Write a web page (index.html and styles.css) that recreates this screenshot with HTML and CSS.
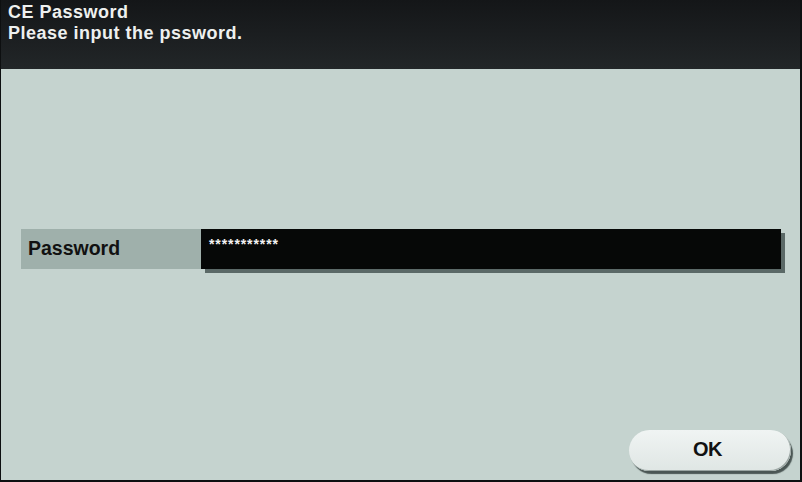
FILE: index.html
```html
<!DOCTYPE html>
<html lang="en">
<head>
<meta charset="utf-8">
<title>CE Password</title>
<link rel="stylesheet" href="styles.css">
</head>
<body>
<div class="screen">
  <header class="title-bar">
    <div class="title">CE Password</div>
    <div class="subtitle">Please input the pssword.</div>
  </header>
  <main class="panel">
    <div class="field-row">
      <div class="field-label">Password</div>
      <div class="field-input">***********</div>
    </div>
    <div class="actions">
      <button class="ok-button" type="button">OK</button>
    </div>
  </main>
</div>
</body>
</html>
```

FILE: styles.css
```css
html, body {
  margin: 0;
  padding: 0;
}

body {
  width: 802px;
  height: 482px;
  overflow: hidden;
  background: #0d0f10;
  font-family: "Liberation Sans", Arial, sans-serif;
}

.screen {
  width: 802px;
  height: 482px;
  display: flex;
  flex-direction: column;
  box-sizing: border-box;
  padding: 0 2px 2px 1px;
}

.title-bar {
  height: 69px;
  flex: none;
  box-sizing: border-box;
  padding: 2px 0 0 7px;
  background: linear-gradient(#141618, #222628);
  color: #eef0ef;
  font-size: 18px;
  font-weight: bold;
  letter-spacing: 0.5px;
  line-height: 21px;
}

.panel {
  flex: 1;
  background: #c5d3cf;
  display: flex;
  flex-direction: column;
  padding: 160px 0 0 20px;
}

.field-row {
  display: flex;
  height: 40px;
}

.field-label {
  width: 180px;
  background: #9fb0ab;
  color: #111;
  font-weight: bold;
  font-size: 19.5px;
  line-height: 38px;
  box-sizing: border-box;
  padding-left: 7px;
}

.field-input {
  width: 580px;
  background: #060807;
  color: #f2f2f2;
  font-size: 14px;
  font-weight: bold;
  letter-spacing: 0.9px;
  line-height: 30px;
  padding-left: 8px;
  box-sizing: border-box;
  box-shadow: 4px 4px 0 #5b6967;
}

.actions {
  margin-top: auto;
  display: flex;
  justify-content: flex-end;
  padding: 0 9px 9px 0;
}

.ok-button {
  width: 162px;
  height: 41px;
  border: none;
  border-radius: 21px;
  background: linear-gradient(#f0f4f3, #dfe6e4);
  box-shadow: inset -1px -1px 0 #9aa5a2, 2px 3px 1px #4a5654;
  font-family: "Liberation Sans", Arial, sans-serif;
  font-size: 20px;
  font-weight: bold;
  letter-spacing: -0.5px;
  line-height: 36px;
  color: #111;
  padding: 0 5px 4px 0;
  box-sizing: border-box;
}
```
